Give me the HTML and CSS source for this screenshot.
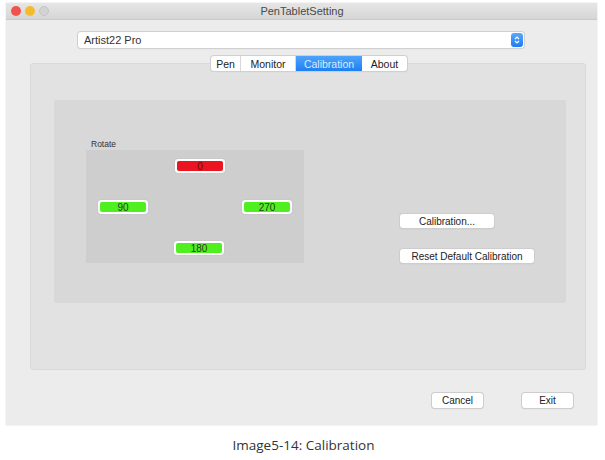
FILE: index.html
```html
<!DOCTYPE html>
<html>
<head>
<meta charset="utf-8">
<link rel="stylesheet" href="styles.css">
</head>
<body>
<div class="window">
  <div class="titlebar">
    <div class="lights">
      <span class="light red"></span>
      <span class="light yellow"></span>
      <span class="light gray"></span>
    </div>
    <div class="title">PenTabletSetting</div>
  </div>
  <div class="body">
    <div class="select">
      <span class="select-text">Artist22 Pro</span>
      <span class="stepper">
        <svg width="8" height="10" viewBox="0 0 8 10"><path d="M2 4 L4 2 L6 4 M2 6 L4 8 L6 6" fill="none" stroke="#fff" stroke-width="1.2"/></svg>
      </span>
    </div>
    <div class="tabarea">
      <div class="tabs">
        <span class="tab">Pen</span>
        <span class="tab">Monitor</span>
        <span class="tab active">Calibration</span>
        <span class="tab">About</span>
      </div>
      <div class="panel">
        <div class="inner">
          <div class="rotate-col">
            <div class="rotate-label">Rotate</div>
            <div class="rotate-box">
              <span class="rbtn red-btn c2 r1"><span>0</span></span>
              <span class="rbtn c1 r2"><span>90</span></span>
              <span class="rbtn c3 r2"><span>270</span></span>
              <span class="rbtn c2 r3 shift"><span>180</span></span>
            </div>
          </div>
          <div class="action-col">
            <button class="btn calib">Calibration...</button>
            <button class="btn reset">Reset Default Calibration</button>
          </div>
        </div>
      </div>
    </div>
    <div class="footer">
      <button class="btn foot">Cancel</button>
      <button class="btn foot">Exit</button>
    </div>
  </div>
</div>
<div class="caption">Image5-14: Calibration</div>
</body>
</html>
```

FILE: styles.css
```css
* { box-sizing: border-box; }
html, body { margin: 0; padding: 0; background: #fff; }
body {
  width: 605px;
  height: 460px;
  font-family: "Liberation Sans", Arial, sans-serif;
  padding-top: 3px;
  overflow: hidden;
}
.window {
  margin-left: 6px;
  width: 591px;
  height: 422px;
  background: #ececec;
  box-shadow: 0 0 1px rgba(0,0,0,0.25);
  display: flex;
  flex-direction: column;
}
.titlebar {
  height: 17px;
  background: linear-gradient(#e6e6e6, #d6d6d6);
  border-bottom: 1px solid #c8c8c8;
  display: flex;
  align-items: center;
  position: relative;
}
.lights {
  display: flex;
  gap: 4px;
  padding-left: 5px;
}
.light {
  width: 10px;
  height: 10px;
  border-radius: 50%;
  display: block;
}
.light.red { background: #f0524d; }
.light.yellow { background: #f5bb2e; }
.light.gray { background: #d3d3d3; border: 1px solid #c4c4c4; }
.title {
  flex: 1;
  text-align: center;
  font-size: 11px;
  color: #4a4a4a;
  margin-right: 42px;
}
.body {
  flex: 1;
  display: flex;
  flex-direction: column;
}
.select {
  margin: 12px 0 0 72px;
  width: 446px;
  height: 16px;
  background: #fff;
  border-radius: 3px;
  box-shadow: 0 0 0 1px #d0d0d0, 0 1px 1px rgba(0,0,0,0.12);
  display: flex;
  align-items: center;
  justify-content: space-between;
  font-size: 11px;
  color: #333;
}
.select-text { padding-left: 6px; }
.stepper {
  width: 12px;
  height: 14px;
  margin-right: 1px;
  background: linear-gradient(#5aa9fb, #1e7bf2);
  border-radius: 3px;
  display: flex;
  align-items: center;
  justify-content: center;
}
.tabarea {
  margin: 8px 0 0 24px;
  width: 556px;
  display: flex;
  flex-direction: column;
  align-items: center;
}
.tabs {
  display: flex;
  height: 15px;
  background: #fff;
  border-radius: 3px;
  box-shadow: 0 0 0 1px #cfcfcf, 0 1px 1px rgba(0,0,0,0.15);
  font-size: 10.5px;
  color: #222;
  position: relative;
  z-index: 1;
  margin-left: 2px;
}
.tab {
  display: flex;
  align-items: center;
  justify-content: center;
  border-right: 1px solid #d8d8d8;
}
.tab:nth-child(1) { width: 30px; }
.tab:nth-child(2) { width: 55px; }
.tab:nth-child(3) { width: 66px; }
.tab:nth-child(4) { width: 45px; border-right: 0; }
.tab.active {
  background: linear-gradient(#4fa3fb, #1f7ff2);
  color: #d9ebff;
  border-right: 0;
}
.panel {
  margin-top: -8px;
  width: 556px;
  height: 307px;
  background: #e2e2e2;
  border: 1px solid #d9d9d9;
  border-radius: 3px;
  padding: 36px 0 0 23px;
}
.inner {
  width: 512px;
  height: 203px;
  background: #d8d8d8;
  border-radius: 2px;
  display: flex;
  padding: 39px 0 0 32px;
}
.rotate-col {
  width: 218px;
  display: flex;
  flex-direction: column;
}
.rotate-label {
  font-size: 8.5px;
  color: #333;
  padding-left: 5px;
  height: 11px;
  line-height: 11px;
}
.rotate-box {
  width: 218px;
  height: 113px;
  background: #cecece;
  display: grid;
  grid-template-columns: 77px 67px 50px;
  grid-template-rows: 41px 41px 14px;
  padding: 9px 0 0 12px;
}
.rbtn {
  width: 50px;
  height: 14px;
  background: #fff;
  border-radius: 3px;
  padding: 2px;
  box-shadow: 0 0 1px rgba(0,0,0,0.25);
  display: block;
}
.rbtn span {
  display: flex;
  align-items: center;
  justify-content: center;
  height: 100%;
  background: #50f020;
  border-radius: 2px;
  font-size: 10px;
  color: #2a3a20;
}
.red-btn span { background: #ea1520; color: #6a0a0a; }
.c1 { grid-column: 1; }
.c2 { grid-column: 2; }
.c3 { grid-column: 3; }
.r1 { grid-row: 1; }
.r2 { grid-row: 2; }
.r3 { grid-row: 3; }
.shift { margin-left: -1px; }
.action-col {
  margin-left: 96px;
  padding-top: 75px;
  display: flex;
  flex-direction: column;
  align-items: flex-start;
  gap: 21px;
}
.btn {
  font-family: "Liberation Sans", Arial, sans-serif;
  font-size: 10px;
  color: #222;
  background: #fff;
  border: 0;
  border-radius: 3px;
  box-shadow: 0 0 0 1px #cdcdcd, 0 1px 1px rgba(0,0,0,0.2);
  height: 14px;
  padding: 0;
  margin: 0;
  display: flex;
  align-items: center;
  justify-content: center;
}
.calib { width: 94px; }
.reset { width: 134px; }
.footer {
  display: flex;
  justify-content: flex-end;
  gap: 39px;
  padding: 23px 24px 0 0;
}
.btn.foot { width: 51px; height: 15px; }
.caption {
  margin-top: 11px;
  text-align: center;
  font-family: "Open Sans", "Noto Sans", sans-serif;
  font-size: 13.5px;
  color: #333;
  padding-left: 2px;
}
```
